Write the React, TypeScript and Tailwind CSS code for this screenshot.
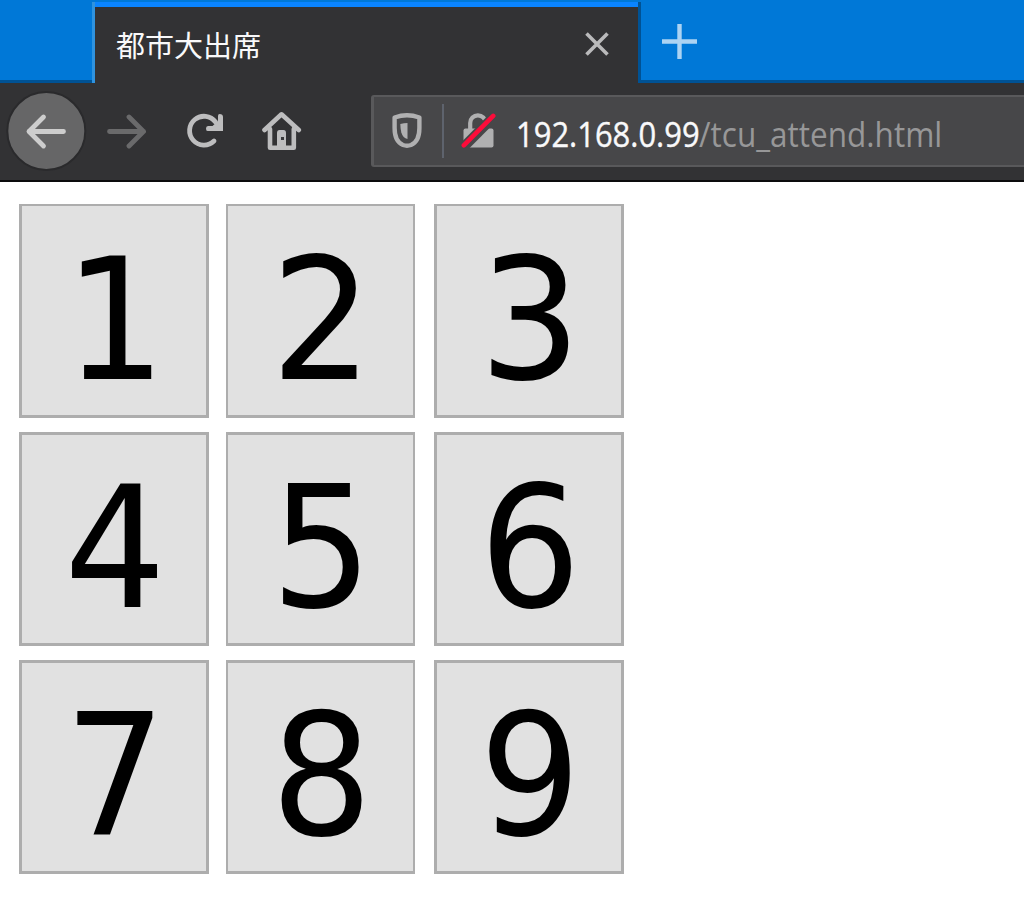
import type { ReactNode } from 'react';

function BackIcon() {
  return (
    <svg className="block shrink-0" width="82" height="82" viewBox="0 0 82 82" fill="none">
      <circle cx="41.300" cy="41" r="39" fill="#666667" stroke="#2a2a2c" strokeWidth="2" />
      <path d="M58.500 41.500H24M38.500 27L24 41.500L38.500 56" stroke="#cdcdcd" strokeWidth="4.800" strokeLinecap="round" strokeLinejoin="round" />
    </svg>
  );
}

function ForwardIcon() {
  return (
    <svg className="block shrink-0" width="40" height="40" viewBox="0 0 40 40" fill="none">
      <path d="M3.500 20.500H37.500M23 6L37.500 20.500L23 35" stroke="#6a6a6b" strokeWidth="4.800" strokeLinecap="round" strokeLinejoin="round" />
    </svg>
  );
}

function ReloadIcon() {
  return (
    <svg className="block shrink-0" width="40" height="40" viewBox="0 0 40 40">
      <path d="M29 30A14.400 14.400 0 1 1 30.500 11" fill="none" stroke="#bdbdbe" strokeWidth="4.800" strokeLinecap="round" />
      <path d="M34.500 3Q38 3 38 6V20H22.500Q21 20 21 17.500Q21 15 23 15H27.500L33 10V5Q33 3 34.500 3Z" fill="#bdbdbe" />
    </svg>
  );
}

function HomeIcon() {
  return (
    <svg className="block shrink-0" width="42" height="42" viewBox="0 0 42 42">
      <path d="M4.500 20L21.500 4.300L38.800 20M10 19V37.800H33.800V19" fill="none" stroke="#bdbdbe" strokeWidth="4.600" strokeLinecap="round" strokeLinejoin="round" />
      <path d="M17 37V23Q17 20 19.500 20H23.500Q26 20 26 23V37Z" fill="#bdbdbe" />
      <rect x="21" y="27" width="3" height="3" fill="#39393b" />
    </svg>
  );
}

function ShieldIcon() {
  return (
    <svg className="block shrink-0" width="30" height="36" viewBox="0 0 30 36">
      <path d="M2.600 4.500Q9 2.300 15 2.300T27.400 4.500V15Q27.400 28.500 19 32Q15 33.400 11 32Q2.600 28.500 2.600 15Z" fill="none" stroke="#b0b0b1" strokeWidth="4.400" strokeLinejoin="round" />
      <path d="M15.500 10V26Q11 25 9.300 19.500Q8.300 15 8.300 11Q12 10 15.500 10Z" fill="#b0b0b1" />
    </svg>
  );
}

function InsecureLockIcon() {
  return (
    <svg className="block shrink-0" width="36" height="36" viewBox="0 0 36 36">
      <path d="M10.200 17V10A7.700 7.700 0 0 1 25.600 10V17" fill="none" stroke="#b0b0b1" strokeWidth="4.200" />
      <rect x="3.500" y="15.500" width="30" height="19" rx="2" fill="#b0b0b1" />
      <path d="M3 34.500L35 2.500" stroke="#474749" strokeWidth="10" />
      <path d="M3.800 32.300L33.200 2.900" stroke="#fc0c3a" strokeWidth="4.600" strokeLinecap="round" />
    </svg>
  );
}

function Key({ children, className }: { children: ReactNode; className: string }) {
  return (
    <button className={`h-[214px] border-[#adadad] bg-[#e1e1e1] px-0 pb-0 text-center font-['DejaVu_Sans',sans-serif] text-[170px] leading-[220px] text-black ${className}`}>
      <span className="block h-full origin-center translate-x-px scale-x-[0.940]">{children}</span>
    </button>
  );
}

export default function App() {
  return (
    <div className="flex h-[903px] w-[1024px] flex-col overflow-hidden bg-white">
      <div className="flex h-[83px] bg-[#0078d7]">
        <div className="w-[92px] border-b-3 border-[#005294]" />
        <div className="mt-[2px] w-[3px] bg-[#2f93df]" />
        <div className="mt-[2px] flex w-[543px] items-center justify-between border-t-5 border-[#0a84ff] bg-[#323234] pr-[28px] pb-[2px] pl-[21px]">
          <span className="text-[29px] leading-[40px] whitespace-nowrap text-[#f9f9fa] font-['Noto_Sans_CJK_JP',sans-serif]">都市大出席</span>
          <svg className="block" width="26" height="26" viewBox="0 0 26 26">
            <path d="M2.500 2.500L23.500 23.500M23.500 2.500L2.500 23.500" stroke="#bababb" strokeWidth="3.600" />
          </svg>
        </div>
        <div className="mt-[2px] w-[3px] bg-[#005294]" />
        <div className="flex flex-1 border-b-3 border-[#005294] pt-[24px] pl-[21px]">
          <svg className="block" width="35" height="35" viewBox="0 0 35 35">
            <path d="M0 17.500H35M17.500 0V35" stroke="#acd3f3" strokeWidth="4.400" />
          </svg>
        </div>
      </div>
      <div className="flex h-[99px] border-b-2 border-[#0c0c0d] bg-[#323234]">
        <div className="flex h-[95px] w-[371px] items-center pl-[5px]">
          <BackIcon />
          <div className="ml-[19px]"><ForwardIcon /></div>
          <div className="ml-[39px]"><ReloadIcon /></div>
          <div className="ml-[35px]"><HomeIcon /></div>
        </div>
        <div className="mt-[12px] flex h-[72px] flex-1 items-center rounded-l-[3px] border-y-2 border-l-3 border-[#59595b] bg-[#474749] pl-[18px]">
          <ShieldIcon />
          <div className="ml-[20px] h-[54px] w-[2px] bg-[#5e636d]" />
          <div className="ml-[16px]"><InsecureLockIcon /></div>
          <div className="mt-[6px] ml-[20px] flex text-[34px] leading-[48px] whitespace-nowrap font-['Open_Sans',sans-serif]">
            <span className="block w-[183px] origin-left scale-x-[0.910] text-[#f9f9fa] [-webkit-text-stroke:0.4px_#f9f9fa]">192.168.0.99</span>
            <span className="block origin-left scale-x-[0.927] text-[#979798]">/tcu_attend.html</span>
          </div>
        </div>
      </div>
      <div className="grid grid-cols-[190px_189px_190px] gap-x-[18px] gap-y-[14px] pt-[22px] pl-[19px]">
        <Key className="border-3 border-t-2 pt-[4px]">1</Key>
        <Key className="-ml-px w-[189px] border-2 border-b-3 pt-[4px]">2</Key>
        <Key className="border-3 border-t-2 pt-[4px]">3</Key>
        <Key className="border-3 pt-[3px]">4</Key>
        <Key className="-ml-px w-[189px] border-x-2 border-y-3 pt-[3px]">5</Key>
        <Key className="border-3 pt-[3px]">6</Key>
        <Key className="border-3 pt-[3px]">7</Key>
        <Key className="-ml-px w-[189px] border-x-2 border-y-3 pt-[3px]">8</Key>
        <Key className="border-3 pt-[3px]">9</Key>
      </div>
    </div>
  );
}
